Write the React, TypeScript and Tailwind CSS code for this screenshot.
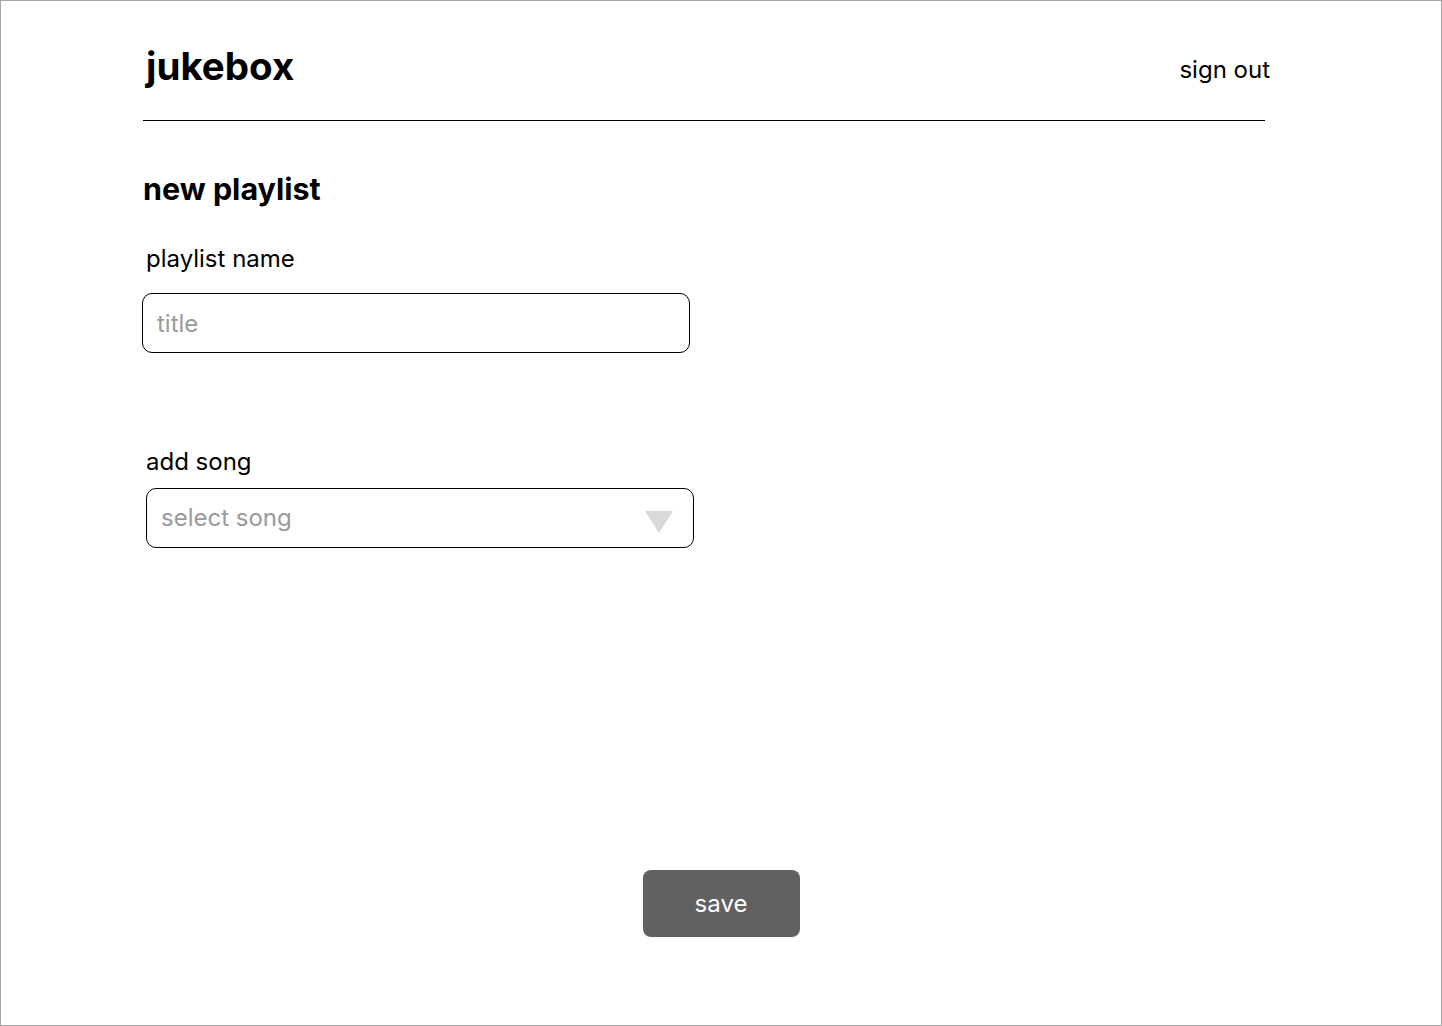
import { useState } from 'react';

export default function App() {
  const [title, setTitle] = useState('');

  return (
    <div
      className="w-[1442px] h-[1026px] bg-white border border-[#a6a6a6] flex flex-col text-black"
      style={{ fontFamily: 'Inter, "Noto Sans", sans-serif' }}
    >
      {/* header */}
      <div className="ml-[145px] w-[1124px] h-[48px] mt-[41px] flex items-center justify-between">
        <h1 className="text-[38.5px] leading-[48px] font-bold">jukebox</h1>
        <a className="text-[24px] leading-[32px] mt-[8px]">sign out</a>
      </div>
      <div className="ml-[142px] w-[1122px] mt-[30px] border-t border-black" />

      {/* form */}
      <div className="ml-[141px] mt-[50px] flex flex-col">
        <h2 className="ml-[1px] text-[30.5px] leading-[36px] font-bold">new playlist</h2>

        <label className="ml-[4px] mt-[37px] text-[24px] leading-[30px]">playlist name</label>
        <input
          value={title}
          onChange={(e) => setTitle(e.target.value)}
          placeholder="title"
          className="mt-[19px] w-[548px] h-[60px] rounded-[10px] border border-black px-[14px] text-[24px] placeholder:text-[#9a9a9a] outline-none"
        />

        <label className="ml-[4px] mt-[94px] text-[24px] leading-[30px]">add song</label>
        <div className="ml-[4px] mt-[11px] w-[548px] h-[60px] rounded-[10px] border border-black px-[14px] flex items-center justify-between">
          <span className="text-[24px] text-[#9a9a9a]">select song</span>
          <svg width="28" height="22" viewBox="0 0 28 22" className="mr-[6px] mt-[8px]">
            <polygon points="0,0 28,0 14,22" fill="#d9d9d9" />
          </svg>
        </div>
      </div>

      <div className="mt-auto mb-[88px] flex justify-center">
        <button className="w-[157px] h-[67px] rounded-[8px] bg-[#616161] text-white text-[24px]">
          save
        </button>
      </div>
    </div>
  );
}
